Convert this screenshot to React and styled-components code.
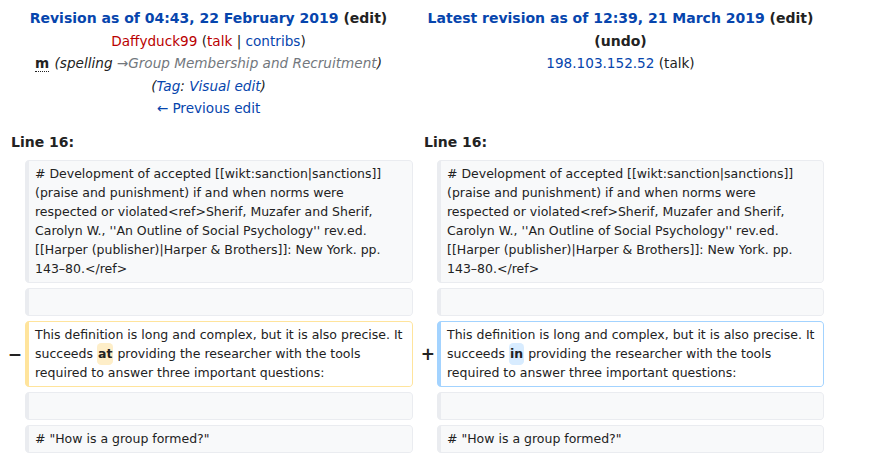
import styled, { createGlobalStyle } from "styled-components"

const GlobalStyle = createGlobalStyle`
  html, body {
    margin: 0;
    padding: 0;
    background: #fff;
  }
  body {
    font-family: "DejaVu Sans", sans-serif;
    color: #222;
    font-size: 14px;
  }
`

const COLS = "25px 388px 24px 387px"

const Page = styled.div`
  padding-top: 7px;
  width: 874px;
`

const HeaderGrid = styled.div`
  display: grid;
  grid-template-columns: 413px 411px;
`

const HeaderCell = styled.div`
  padding-left: 4px;
  text-align: center;
  font-size: 13.6px;
  line-height: 22.5px;
`

const Title = styled.div`
  font-weight: bold;
  font-size: 14px;
  line-height: 22.5px;
`

const Link = styled.a`
  color: ${(p) => (p.$new ? "#ba0000" : p.$visited ? "#222" : "#0645ad")};
  text-decoration: none;
  cursor: pointer;
`

const Minor = styled.abbr`
  font-weight: bold;
  text-decoration: none;
  border-bottom: 1px dotted #222;
  margin-right: 1px;
`

const Comment = styled.span`
  font-style: italic;
`

const AutoComment = styled.span`
  color: #72777d;
  a {
    color: #72777d;
  }
`

const DiffGrid = styled.div`
  display: grid;
  grid-template-columns: ${COLS};
  row-gap: 5px;
  margin-top: 10px;
`

const LineNo = styled.div`
  grid-column: span 2;
  font-weight: bold;
  line-height: 22.4px;
  padding-left: 11px;
  padding-top: 1px;
  margin-bottom: 2px;
`

const Marker = styled.div`
  display: flex;
  align-items: center;
  justify-content: flex-end;
  padding-right: ${(p) => p.$pad}px;
  font-weight: bold;
  font-size: 17px;
  line-height: 1.2;
`

const borders = {
  context: "#eaecf0",
  deleted: "#ffe49c",
  added: "#a3d3ff",
}

const Line = styled.div`
  box-sizing: border-box;
  font-size: 12.5px;
  line-height: 19px;
  min-height: 28px;
  padding: 3.5px 6px;
  white-space: pre-wrap;
  word-wrap: break-word;
  border-style: solid;
  border-width: 1px 1px 1px 4px;
  border-radius: 0.33em;
  border-color: ${(p) => borders[p.$kind]};
  background: ${(p) => (p.$kind === "context" ? "#f8f9fa" : "#fff")};
  color: #222;
`

const Change = styled.span`
  font-weight: bold;
  border-radius: 0.33em;
  padding: 0.25em 1px;
  background: ${(p) => (p.$kind === "added" ? "#d8ecff" : "#feeec8")};
`

const refText =
  "# Development of accepted [[wikt:sanction|sanctions]] (praise and punishment) if and when norms were respected or violated<ref>Sherif, Muzafer and Sherif, Carolyn W., ''An Outline of Social Psychology'' rev.ed. [[Harper (publisher)|Harper & Brothers]]: New York. pp. 143–80.</ref>"

const Sentence = ({ word, kind }) => (
  <>
    This definition is long and complex, but it is also precise. It succeeds{" "}
    <Change $kind={kind}>{word}</Change> providing the researcher with the tools required to answer three important questions:
  </>
)

const ContextRow = ({ children }) => (
  <>
    <Marker $pad={3} />
    <Line $kind="context">{children}</Line>
    <Marker $pad={2} />
    <Line $kind="context">{children}</Line>
  </>
)

export default function App() {
  return (
    <Page>
      <GlobalStyle />
      <HeaderGrid>
        <HeaderCell>
          <Title>
            <Link>Revision as of 04:43, 22 February 2019</Link> (<Link $visited>edit</Link>)
          </Title>
          <div>
            <Link $new>Daffyduck99</Link> (<Link $new>talk</Link> | <Link>contribs</Link>)
          </div>
          <div>
            <Minor title="This is a minor edit">m</Minor>{" "}
            <Comment>
              (spelling <AutoComment><a>→</a>Group Membership and Recruitment</AutoComment>)
            </Comment>
          </div>
          <div>
            <Comment>
              (<Link>Tag</Link>: <Link>Visual edit</Link>)
            </Comment>
          </div>
          <div>
            <Link>← Previous edit</Link>
          </div>
        </HeaderCell>
        <HeaderCell>
          <Title>
            <Link>Latest revision as of 12:39, 21 March 2019</Link> (<Link $visited>edit</Link>)
          </Title>
          <Title>
            (<Link $visited>undo</Link>)
          </Title>
          <div>
            <Link>198.103.152.52</Link> (<Link $visited>talk</Link>)
          </div>
        </HeaderCell>
      </HeaderGrid>

      <DiffGrid>
        <LineNo>Line 16:</LineNo>
        <LineNo>Line 16:</LineNo>

        <ContextRow>{refText}</ContextRow>
        <ContextRow>{""}</ContextRow>

        <Marker $pad={3}>−</Marker>
        <Line $kind="deleted">
          <Sentence word="at" kind="deleted" />
        </Line>
        <Marker $pad={2}>+</Marker>
        <Line $kind="added">
          <Sentence word="in" kind="added" />
        </Line>

        <ContextRow>{""}</ContextRow>
        <ContextRow>{'# "How is a group formed?"'}</ContextRow>
      </DiffGrid>
    </Page>
  )
}
